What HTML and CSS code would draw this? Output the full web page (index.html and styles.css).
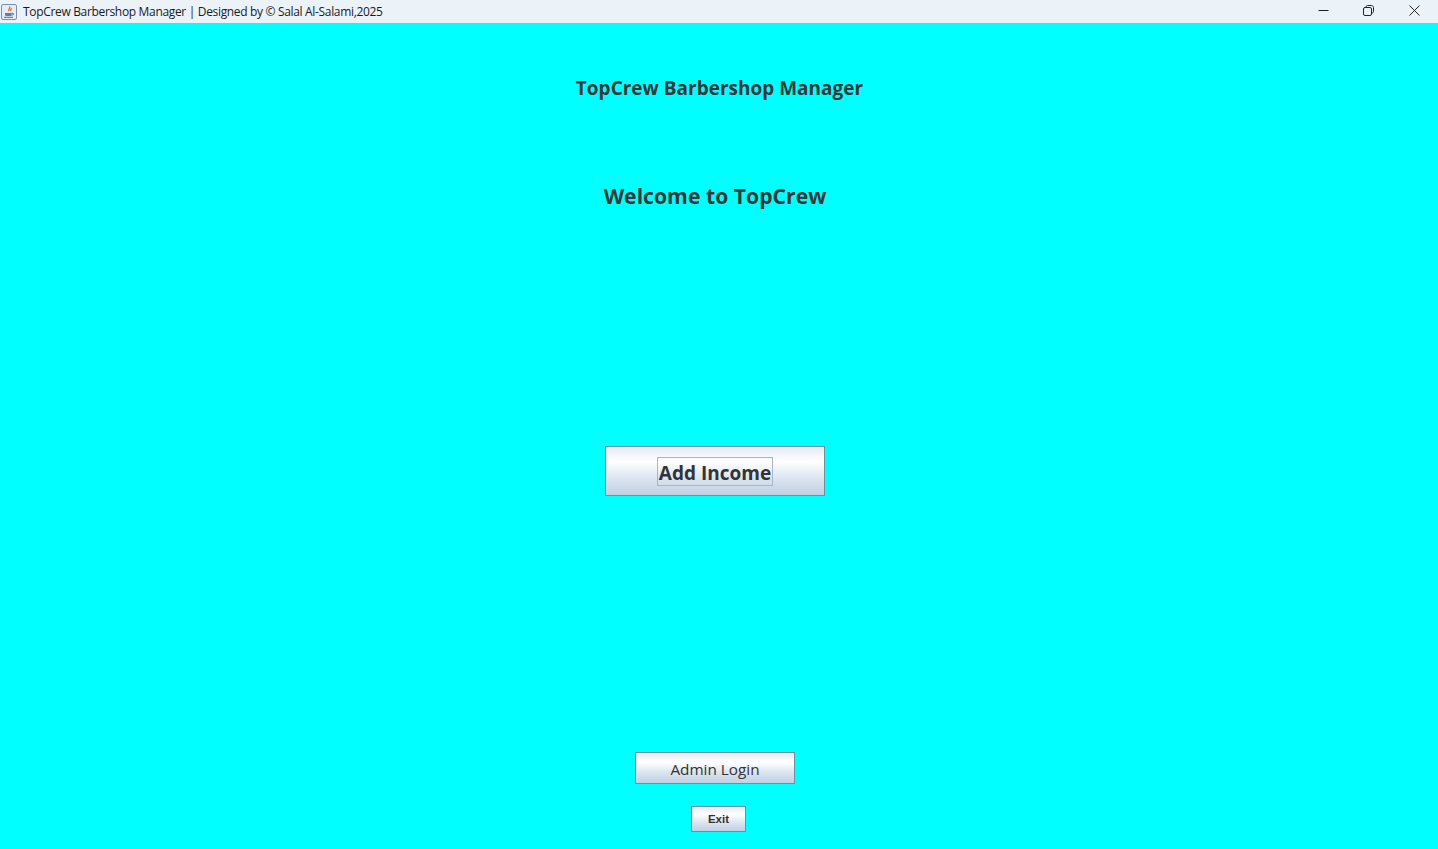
FILE: index.html
```html
<!DOCTYPE html>
<html lang="en">
<head>
<meta charset="utf-8">
<title>TopCrew Barbershop Manager</title>
<link rel="stylesheet" href="styles.css">
</head>
<body>
<div class="window">
  <header class="titlebar">
    <div class="title-left">
      <svg class="app-icon" width="18" height="18" viewBox="0 0 18 18">
        <rect x="1.5" y="1.5" width="15" height="15" rx="1.5" fill="#e4ecf6" stroke="#7d8fa8"/>
        <path d="M9.5 3.5c1.500 1.500-1.800 2.600-.6 4.600M11.200 5c.6 1-1 1.500-.6 3" fill="none" stroke="#e0701c" stroke-width="1.300"/>
        <path d="M5 10h6.500v1.500c0 1-.8 1.500-1.500 1.500H6.500C5.700 13 5 12.500 5 11.500z" fill="#5a7fa8"/>
        <path d="M11.500 10.300h1.500c1 0 1 1.700-1.500 1.900M4 14.300h9" fill="none" stroke="#4a6f98"/>
      </svg>
      <span class="title-text">TopCrew Barbershop Manager | Designed by © Salal Al-Salami,2025</span>
    </div>
    <div class="controls">
      <svg class="control control-min" width="11" height="11" viewBox="0 0 11 11"><path d="M.5 5.500h10" stroke="#222" fill="none"/></svg>
      <svg class="control control-max" width="11" height="11" viewBox="0 0 11 11"><path d="M3 2.500V2c0-.8.600-1.500 1.500-1.500H8.500c1.100 0 2 .9 2 2v4c0 .9-.6 1.500-1.500 1.500h-.5" stroke="#222" fill="none"/><rect x=".5" y="2.500" width="8" height="8" rx="1.500" stroke="#222" fill="none"/></svg>
      <svg class="control control-close" width="11" height="11" viewBox="0 0 11 11"><path d="M.5.500l10 10M10.500.500l-10 10" stroke="#222" fill="none"/></svg>
    </div>
  </header>
  <main class="content">
    <h1 class="app-title">TopCrew Barbershop Manager</h1>
    <h2 class="welcome">Welcome to TopCrew</h2>
    <button class="btn btn-add"><span class="focus-ring">Add Income</span></button>
    <button class="btn btn-admin"><span class="btn-admin-label">Admin Login</span></button>
    <button class="btn btn-exit">Exit</button>
  </main>
</div>
</body>
</html>
```

FILE: styles.css
```css
* { box-sizing: border-box; }
html, body { margin: 0; height: 100%; overflow: hidden; }
body { font-family: "Open Sans", "Noto Sans", sans-serif; color: #333; }
.window { display: flex; flex-direction: column; height: 849px; background: #00ffff; }
.titlebar {
  height: 23px; flex: none;
  display: flex; justify-content: space-between; align-items: center;
  background: #ebf3f9;
}
.title-left { display: flex; align-items: center; }
.app-icon { margin-left: 0; }
.title-text { margin-left: 5px; font-size: 12px; letter-spacing: -0.33px; color: #1a1a1a; white-space: nowrap; }
.controls { display: flex; align-items: center; padding-right: 18px; padding-bottom: 3px; }
.control-min { margin-right: 34px; }
.control-max { margin-right: 35px; }
.content { flex: 1; display: flex; flex-direction: column; align-items: center; padding-right: 8px; }
.app-title {
  margin: 52px 0 0 9px; height: 26px; line-height: 26px;
  font-size: 19px; font-weight: 700; color: #383838;
}
.welcome {
  margin: 79px 0 0 0; height: 32px; line-height: 32px;
  font-size: 21.2px; font-weight: 700; color: #383838;
}
.btn {
  display: flex; align-items: center; justify-content: center; padding: 0;
  border: 1px solid #7a8a99;
  background: linear-gradient(#e3eaf5 0%, #ffffff 30%, #dbe5f0 65%, #c0cfe3 100%);
  color: #333; font-family: inherit;
}
.btn-add { width: 220px; height: 50px; margin-top: 234px; font-size: 19px; font-weight: 700; }
.focus-ring {
  display: block; height: 29px; line-height: 30px; padding: 0 0.5px;
  border: 1px solid #a3b8cc;
}
.btn-admin { width: 160px; height: 32px; margin-top: 256px; font-size: 15.3px; font-weight: 400; }
.btn-admin-label { margin-top: 2px; }
.btn-exit {
  width: 55px; height: 26px; margin: 22px 0 0 7px;
  font-family: "Liberation Sans", Arial, sans-serif; font-size: 11.5px; font-weight: 700;
}
```
